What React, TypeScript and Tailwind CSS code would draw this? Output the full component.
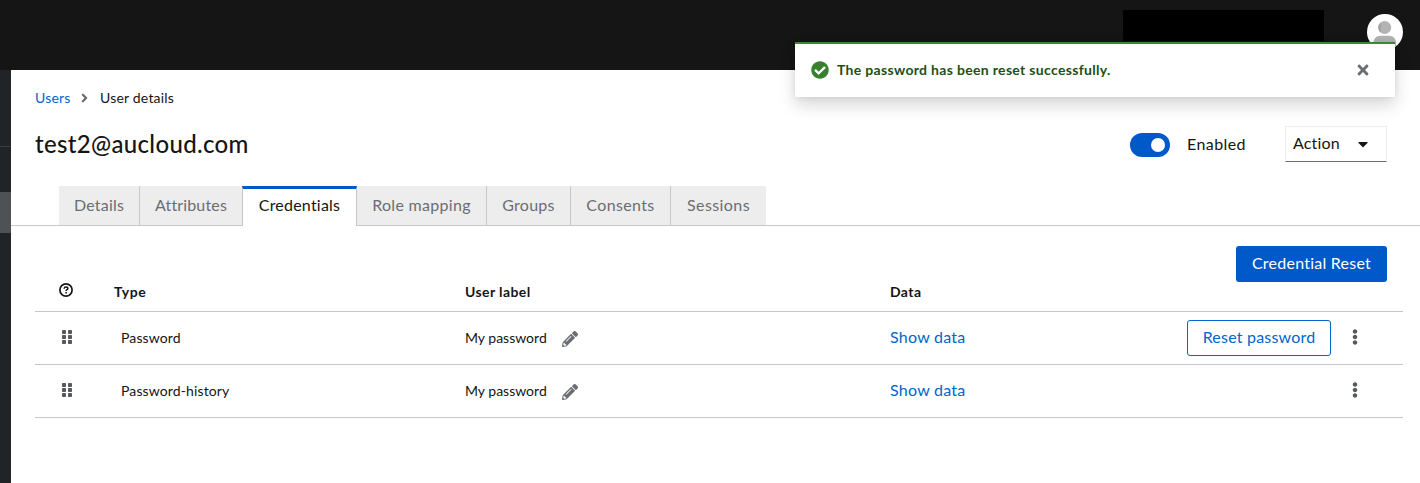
import type { ReactNode } from "react";
import {
  FaAngleRight,
  FaCaretDown,
  FaCheckCircle,
  FaEllipsisV,
  FaGripVertical,
  FaPencilAlt,
  FaTimes,
} from "react-icons/fa";

const tabs = [
  { label: "Details", cls: "w-[81px] border-r tracking-[0.2px]" },
  { label: "Attributes", cls: "w-[102px] tracking-[0.15px]" },
  { label: "Credentials", cls: "w-[115px] tracking-[0.22px]", active: true },
  { label: "Role mapping", cls: "w-[130px] border-r tracking-[0.3px]" },
  { label: "Groups", cls: "w-[84px] border-r tracking-[0.25px]" },
  { label: "Consents", cls: "w-[100px] border-r tracking-[0.36px]" },
  { label: "Sessions", cls: "w-[95px] tracking-[0.41px]" },
];

function HelpIcon() {
  return (
    <svg viewBox="0 0 14 14" className="size-[14px]" fill="none" stroke="#151515">
      <circle cx="7" cy="7" r="6.1" strokeWidth="1.7" />
      <path d="M5.1 5.7C5.2 4.6 6 4.1 7 4.1s1.9.6 1.9 1.5c0 1.1-1.8 1.1-1.8 2.3" strokeWidth="1.5" />
      <path d="M7.1 8.9v1.5" strokeWidth="1.6" />
    </svg>
  );
}

function Avatar() {
  return (
    <svg viewBox="0 0 36 36" className="size-9">
      <defs>
        <clipPath id="avatar-clip">
          <circle cx="18" cy="18" r="18" />
        </clipPath>
      </defs>
      <g clipPath="url(#avatar-clip)">
        <rect width="36" height="36" fill="#fff" />
        <circle cx="17.7" cy="13.5" r="6.5" fill="#b3b3b3" />
        <path d="M14 8.2a6.5 6.5 0 0 0 0 10.6z" fill="#a3a3a3" />
        <path d="M6.5 36v-7c0-4.5 3-7.3 7-7.3h8.500c4 0 7 2.800 7 7.300v7z" fill="#b3b3b3" />
      </g>
    </svg>
  );
}

function Row({ type, action }: { type: string; action?: ReactNode }) {
  return (
    <div className="flex h-[53px] items-center border-b border-[#c7c7c7] text-sm">
      <div className="w-[86px] pl-[25px]">
        <FaGripVertical className="mb-[3px] h-4 w-[14px] text-[#56595d]" />
      </div>
      <div className="w-[344px] tracking-[0.12px]">{type}</div>
      <div className="flex w-[425px] items-center">
        <span className="w-[97px]">My password</span>
        <FaPencilAlt className="mt-[2px] size-4 text-[#6a6e73]" />
      </div>
      <div className="pb-[2px] text-base tracking-[0.25px] text-[#06c]">Show data</div>
      <div className="ml-auto flex items-center pr-[40px]">
        {action}
        <FaEllipsisV className="mb-[2px] h-4 w-4 text-[#56595d]" />
      </div>
    </div>
  );
}

export default function App() {
  return (
    <div className="relative flex h-[483px] w-[1420px] flex-col overflow-hidden bg-white font-['Lato','Noto_Sans',sans-serif] text-[#151515]">
      <header className="flex h-[70px] shrink-0 items-start justify-end bg-[#151515] pr-[17px]">
        <div className="mt-[10px] mr-[43px] h-[31px] w-[201px] bg-black" />
        <div className="mt-[14px]">
          <Avatar />
        </div>
      </header>

      <div className="flex flex-1">
        <aside className="flex w-[11px] shrink-0 flex-col bg-[#212427]">
          <div className="h-[77px] border-b border-[#3c3f42]" />
          <div className="mt-[45px] h-[41px] bg-[#4f5255]" />
        </aside>

        <main className="flex min-w-0 flex-1 flex-col">
          <nav className="mt-[18px] flex h-5 items-center pl-6 text-sm">
            <span className="w-[45px] tracking-[0.2px] text-[#06c]">Users</span>
            <FaAngleRight className="h-[14px] w-[9px] text-[#6a6e73]" />
            <span className="ml-[11px] tracking-[0.2px]">User details</span>
          </nav>

          <div className="mt-[18px] flex h-9 items-center pr-[33px] pl-6">
            <h1 className="pb-px text-2xl font-medium tracking-[0.33px]">test2@aucloud.com</h1>
            <div className="mt-[2px] ml-auto flex h-6 w-10 items-center justify-end rounded-full bg-[#0059c8] pr-[5px]">
              <div className="size-[14px] rounded-full bg-white" />
            </div>
            <span className="ml-[17px] w-[98px] tracking-[0.41px]">Enabled</span>
            <button className="flex h-9 w-[102px] items-center border border-[#ededed] border-b-[#6a6e73] pl-[7px] tracking-[0.15px]">
              <span className="w-[65px] pb-[2px] text-left">Action</span>
              <FaCaretDown className="mb-px h-4 w-[10px]" />
            </button>
          </div>

          <div className="mt-6 flex h-10 border-b border-[#c7c7c7] pl-12">
            {tabs.map((t) => (
              <div
                key={t.label}
                className={
                  t.active
                    ? `${t.cls} flex h-10 items-center justify-center border-x border-t-[3px] border-x-[#c7c7c7] border-t-[#0059c8] bg-white pb-[6px]`
                    : `${t.cls} flex h-[39px] items-center justify-center border-[#c7c7c7] bg-[#ededed] pb-[2px] text-[#6a6e73]`
                }
              >
                {t.label}
              </div>
            ))}
          </div>

          <div className="mt-5 flex h-9 justify-end pr-[33px]">
            <button className="h-9 w-[151px] rounded-[3px] bg-[#0059c8] pb-[3px] tracking-[0.24px] text-white">
              Credential Reset
            </button>
          </div>

          <section className="mr-[17px] ml-6">
            <div className="flex h-[30px] border-b border-[#c7c7c7] text-sm leading-5 font-bold">
              <div className="w-[79px] pt-px pl-6">
                <HelpIcon />
              </div>
              <div className="w-[351px] tracking-[0.6px]">Type</div>
              <div className="w-[425px] tracking-[0.4px]">User label</div>
              <div className="tracking-[0.4px]">Data</div>
            </div>
            <Row
              type="Password"
              action={
                <button className="mr-[16px] h-9 w-[144px] rounded-[3px] border border-[#06c] pb-[3px] text-base tracking-[0.2px] text-[#06c]">
                  Reset password
                </button>
              }
            />
            <Row type="Password-history" />
          </section>
        </main>
      </div>

      <div className="absolute top-[42px] left-[795px] flex h-[55px] w-[600px] items-center border-t-2 border-[#3e8635] bg-white pr-6 pb-[2px] pl-4 shadow-[0_8px_16px_rgba(3,3,3,0.16),0_0_6px_rgba(3,3,3,0.08)]">
        <FaCheckCircle className="size-[18px] text-[#36802f]" />
        <span className="ml-2 text-sm font-bold tracking-[0.32px] text-[#1e4f18]">
          The password has been reset successfully.
        </span>
        <FaTimes className="ml-auto size-4 text-[#6a6e73]" />
      </div>
    </div>
  );
}
